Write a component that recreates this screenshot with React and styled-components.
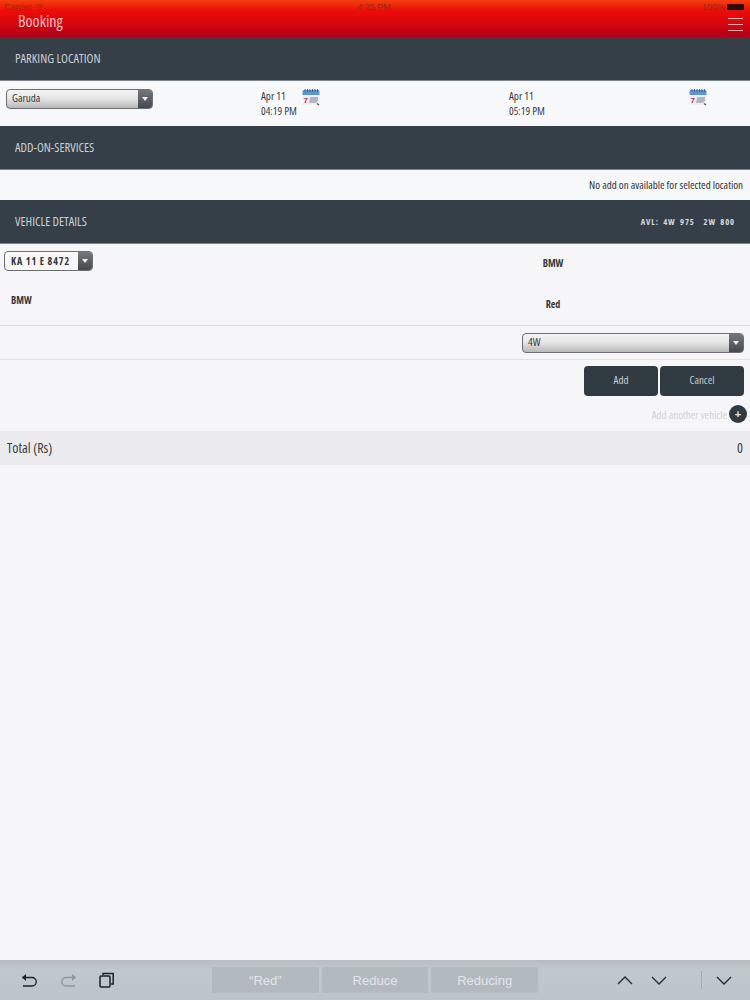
import React from 'react';
import styled, { createGlobalStyle } from 'styled-components';

const GlobalStyle = createGlobalStyle`
  html, body {
    margin: 0;
    padding: 0;
    background: #f6f6f8;
  }
  * {
    box-sizing: border-box;
  }
`;

const narrow = `"Open Sans", "Liberation Sans", sans-serif`;

const Page = styled.div`
  width: 750px;
  height: 1000px;
  display: flex;
  flex-direction: column;
  overflow: hidden;
  background: #f6f6f8;
  font-family: ${narrow};
  font-stretch: 75%;
`;

const Header = styled.header`
  height: 37px;
  flex: none;
  background: linear-gradient(#f2400f 0%, #ee0d08 28%, #d8060f 62%, #ae0019 100%);
  padding: 0 6px 0 18px;
  display: flex;
  flex-direction: column;
`;

const StatusBar = styled.div`
  height: 14px;
  margin-left: -14px;
  display: grid;
  grid-template-columns: 1fr auto 1fr;
  align-items: center;
  font-family: "Liberation Sans", sans-serif;
  font-size: 9px;
  color: #9a2a18;
`;

const StatusLeft = styled.div`
  display: flex;
  align-items: center;
  gap: 3px;
`;

const StatusRight = styled.div`
  display: flex;
  align-items: center;
  justify-content: flex-end;
  gap: 2px;
`;

const Battery = styled.span`
  width: 17px;
  height: 6px;
  border-radius: 1px;
  background: #2a0a0a;
`;

const TitleRow = styled.div`
  flex: 1;
  display: flex;
  align-items: flex-start;
  justify-content: space-between;
`;

const Title = styled.div`
  margin-top: -1px;
  font-size: 16px;
  line-height: 16px;
  color: #f9c9c4;
`;

const Burger = styled.div`
  width: 15px;
  margin-top: 4px;
  margin-right: 1px;
  display: flex;
  flex-direction: column;
  gap: 5px;

  span {
    height: 1px;
    background: #f6b4ae;
  }
`;

const SectionBar = styled.div`
  height: 44px;
  flex: none;
  background: #353f47;
  border-bottom: 1px solid #7d868c;
  padding: 0 15px 1px;
  display: flex;
  align-items: center;
  justify-content: space-between;
  color: #c9d0d3;
  font-size: 12.6px;
`;

const Availability = styled.div`
  font-size: 8.5px;
  font-weight: 700;
  letter-spacing: 0.9px;
  word-spacing: 2px;
  white-space: pre;
  color: #d5dadc;
`;

const LocationRow = styled.div`
  height: 45px;
  flex: none;
  background: #f7f8f9;
  display: grid;
  grid-template-columns: 261px 248px 180px 1fr;
`;

const Select = styled.div`
  width: ${props => props.$width}px;
  height: 20px;
  margin: ${props => props.$margin || 0};
  border: 1px solid #6c6f72;
  border-radius: 4px;
  overflow: hidden;
  display: flex;
  align-items: stretch;
  background: ${props => props.$plain
    ? '#f8f8f8'
    : 'linear-gradient(#f4f4f4 0%, #e6e6e6 45%, #b9b9b9 100%)'};
`;

const SelectText = styled.div`
  flex: 1;
  min-width: 0;
  padding: 0 0 ${props => props.$plate ? 0 : 3}px ${props => props.$plate ? 6 : 5}px;
  display: flex;
  align-items: center;
  color: #35393c;
  font-size: ${props => props.$plate ? 10 : 11}px;
  font-weight: ${props => props.$plate ? 700 : 400};
  letter-spacing: ${props => props.$plate ? 0.9 : 0}px;
  white-space: nowrap;
`;

const SelectArrow = styled.div`
  width: 14px;
  flex: none;
  background: linear-gradient(#74787c, #45494d);
  display: flex;
  align-items: center;
  justify-content: center;

  &::after {
    content: '';
    border-left: 3px solid transparent;
    border-right: 3px solid transparent;
    border-top: 4px solid #eceff1;
  }
`;

const DateCell = styled.div`
  padding-top: 7px;
  display: flex;
  align-items: flex-start;
  gap: ${props => props.$gap}px;
`;

const DateText = styled.div`
  font-size: 11px;
  line-height: 15px;
  color: #3c4043;
  white-space: nowrap;
`;

const IconCell = styled.div`
  padding-top: 7px;
`;

const NoteRow = styled.div`
  height: 30px;
  flex: none;
  background: #f7f8f9;
  padding: 0 7px 2px;
  display: flex;
  align-items: center;
  justify-content: flex-end;
  font-size: 11px;
  color: #2f3235;
`;

const VehicleGrid = styled.div`
  height: 82px;
  flex: none;
  display: grid;
  grid-template-columns: 375px 356px;
  grid-template-rows: 39px 43px;
  border-bottom: 1px solid #dfdfe1;
`;

const PlateCell = styled.div`
  padding: 7px 0 0 4px;
`;

const BoldValue = styled.div`
  font-size: 10px;
  font-weight: 700;
  color: #37393b;
  text-align: ${props => props.$align || 'left'};
  padding: ${props => props.$padding};
`;

const TypeRow = styled.div`
  height: 34px;
  flex: none;
  padding: 7px 6px 0 0;
  display: flex;
  justify-content: flex-end;
  border-bottom: 1px solid #e2e2e4;
`;

const ButtonRow = styled.div`
  flex: none;
  padding: 6px 6px 0 0;
  display: flex;
  justify-content: flex-end;
  gap: 2px;
`;

const ActionButton = styled.button`
  width: ${props => props.$width}px;
  height: 30px;
  padding: 0 0 4px;
  border: none;
  border-radius: 4px;
  background: #2f3b41;
  color: #c6cdcf;
  font-family: ${narrow};
  font-stretch: 75%;
  font-size: 11px;
`;

const AddAnother = styled.div`
  height: 20px;
  flex: none;
  margin-top: 8px;
  padding-right: 3px;
  display: flex;
  align-items: center;
  justify-content: flex-end;
  gap: 2px;
  font-size: 11px;
  color: #d3d3d5;
`;

const PlusCircle = styled.div`
  width: 18px;
  height: 18px;
  border-radius: 50%;
  background: #2f3b41;
  color: #dfe3e4;
  display: flex;
  align-items: center;
  justify-content: center;
  font-family: "Liberation Sans", sans-serif;
  font-size: 11px;
  font-weight: 700;
`;

const TotalRow = styled.div`
  height: 34px;
  flex: none;
  margin-top: 7px;
  padding: 0 7px 2px;
  background: #ebebed;
  display: flex;
  align-items: center;
  justify-content: space-between;
  font-size: 14px;
  color: #3a3d40;
`;

const Spacer = styled.div`
  flex: 1;
`;

const Keyboard = styled.div`
  height: 40px;
  flex: none;
  background: linear-gradient(#b9bdc1 0%, #c0c8cd 25%, #bcc5cb 100%);
  display: grid;
  grid-template-columns: 212px 326px 1fr;
  align-items: center;
`;

const IconGroup = styled.div`
  display: flex;
  align-items: center;
  gap: ${props => props.$gap}px;
  padding-left: ${props => props.$left || 0}px;
`;

const Suggestions = styled.div`
  display: flex;
  gap: 3px;
`;

const Suggestion = styled.div`
  width: 107px;
  height: 26px;
  border-radius: 2px;
  background: #b2b9bf;
  color: #e2e6e8;
  display: flex;
  align-items: center;
  justify-content: center;
  font-family: "Liberation Sans", sans-serif;
  font-size: 13px;
`;

const Divider = styled.span`
  width: 1px;
  height: 18px;
  margin: 0 -4px 0 16px;
  background: #a5abb0;
`;

const Calendar = () => (
  <svg width="18" height="18" viewBox="0 0 18 18">
    <rect x="0.5" y="2" width="17" height="15" rx="1.5" fill="#eef0f2" />
    <path d="M0.5 3.5a1.5 1.5 0 0 1 1.5-1.5h14a1.5 1.5 0 0 1 1.5 1.5V7H0.5z" fill="#5b97d4" />
    <path d="M3 1v3M5.5 1v3M8 1v3M10.5 1v3M13 1v3M15.5 1v3" stroke="#3c5f88" strokeWidth="0.9" />
    <text x="1.5" y="14.5" fontFamily="Liberation Sans" fontSize="8" fontWeight="700" fill="#c5283d">7</text>
    <path d="M7 15l1-6h8v4l-2 2z" fill="#b4b7ba" />
    <path d="M15 15.5l2 1.5" stroke="#55595c" strokeWidth="1.4" />
  </svg>
);

const Wifi = () => (
  <svg width="9" height="7" viewBox="0 0 9 7" fill="none" stroke="#9a2a18">
    <path d="M0.5 2.4a6 6 0 0 1 8 0M2 4a3.8 3.8 0 0 1 5 0" />
    <path d="M3.2 5.2L4.5 6.8 5.8 5.2a2 2 0 0 0-2.6 0z" fill="#9a2a18" stroke="none" />
  </svg>
);

const Undo = ({ color }) => (
  <svg width="17" height="15" viewBox="0 0 17 15" fill="none" stroke={color} strokeWidth="1.3">
    <path d="M1.5 4.5H11a4.2 4.2 0 0 1 0 8.5H2" />
    <path d="M5 1L1 4.5 5 8" fill={color} stroke="none" />
  </svg>
);

const Redo = ({ color }) => (
  <svg width="17" height="15" viewBox="0 0 17 15" fill="none" stroke={color} strokeWidth="1.3">
    <path d="M15.5 4.5H6a4.2 4.2 0 0 0 0 8.5h9" />
    <path d="M12 1l4 3.5L12 8" fill={color} stroke="none" />
  </svg>
);

const Paste = () => (
  <svg width="16" height="16" viewBox="0 0 16 16" fill="none" stroke="#1f2225" strokeWidth="1.5">
    <rect x="1" y="4" width="10" height="11" rx="1" />
    <path d="M4 3V1.5h10.2V12H12" />
  </svg>
);

const Chevron = ({ up }) => (
  <svg width="16" height="9" viewBox="0 0 16 9" fill="none" stroke="#26292c" strokeWidth="1.3">
    <path d={up ? 'M1 8l7-7 7 7' : 'M1 1l7 7 7-7'} />
  </svg>
);

function App() {
  return (
    <Page>
      <GlobalStyle />
      <Header>
        <StatusBar>
          <StatusLeft>Carrier <Wifi /></StatusLeft>
          <div>4:25 PM</div>
          <StatusRight>100% <Battery /></StatusRight>
        </StatusBar>
        <TitleRow>
          <Title>Booking</Title>
          <Burger><span /><span /><span /></Burger>
        </TitleRow>
      </Header>

      <SectionBar>PARKING LOCATION</SectionBar>
      <LocationRow>
        <div>
          <Select $width={147} $margin="8px 0 0 6px">
            <SelectText>Garuda</SelectText>
            <SelectArrow />
          </Select>
        </div>
        <DateCell $gap={5}>
          <DateText>Apr 11<br />04:19 PM</DateText>
          <Calendar />
        </DateCell>
        <DateCell $gap={0}>
          <DateText>Apr 11<br />05:19 PM</DateText>
        </DateCell>
        <IconCell><Calendar /></IconCell>
      </LocationRow>

      <SectionBar>ADD-ON-SERVICES</SectionBar>
      <NoteRow>No add on available for selected location</NoteRow>

      <SectionBar>
        VEHICLE DETAILS
        <Availability>AVL: 4W 975  2W 800</Availability>
      </SectionBar>
      <VehicleGrid>
        <PlateCell>
          <Select $width={89} $plain>
            <SelectText $plate>KA 11 E 8472</SelectText>
            <SelectArrow />
          </Select>
        </PlateCell>
        <BoldValue $align="center" $padding="12px 0 0">BMW</BoldValue>
        <BoldValue $padding="10px 0 0 11px">BMW</BoldValue>
        <BoldValue $align="center" $padding="14px 0 0">Red</BoldValue>
      </VehicleGrid>
      <TypeRow>
        <Select $width={222}>
          <SelectText>4W</SelectText>
          <SelectArrow />
        </Select>
      </TypeRow>
      <ButtonRow>
        <ActionButton $width={74}>Add</ActionButton>
        <ActionButton $width={84}>Cancel</ActionButton>
      </ButtonRow>
      <AddAnother>
        Add another vehicle
        <PlusCircle>+</PlusCircle>
      </AddAnother>
      <TotalRow>
        <span>Total (Rs)</span>
        <span>0</span>
      </TotalRow>
      <Spacer />

      <Keyboard>
        <IconGroup $gap={22} $left={21}>
          <Undo color="#1f2225" />
          <Redo color="#8f979c" />
          <Paste />
        </IconGroup>
        <Suggestions>
          <Suggestion>“Red”</Suggestion>
          <Suggestion>Reduce</Suggestion>
          <Suggestion>Reducing</Suggestion>
        </Suggestions>
        <IconGroup $gap={18} $left={79}>
          <Chevron up />
          <Chevron />
          <Divider />
          <Chevron />
        </IconGroup>
      </Keyboard>
    </Page>
  );
}

export default App;
